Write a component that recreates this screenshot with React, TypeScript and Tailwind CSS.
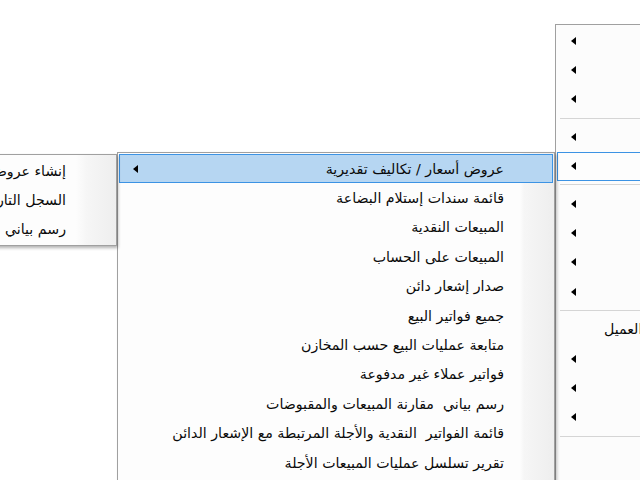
import React from "react"

type Item = { label?: string; arrow?: boolean; sep?: boolean; hot?: "fill" | "outline" }

const middleItems: Item[] = [
  { label: "عروض أسعار / تكاليف تقديرية", arrow: true, hot: "fill" },
  { label: "قائمة سندات إستلام البضاعة" },
  { label: "المبيعات النقدية" },
  { label: "المبيعات على الحساب" },
  { label: "صدار إشعار دائن" },
  { label: "جميع فواتير البيع" },
  { label: "متابعة عمليات البيع حسب المخازن" },
  { label: "فواتير عملاء غير مدفوعة" },
  { label: "رسم بياني  مقارنة المبيعات والمقبوضات" },
  { label: "قائمة الفواتير  النقدية والأجلة المرتبطة مع الإشعار الدائن" },
  { label: "تقرير تسلسل عمليات المبيعات الأجلة" },
]

const leftItems: Item[] = [
  { label: "إنشاء عروض أسعار" },
  { label: "السجل التاريخي" },
  { label: "رسم بياني للعروض" },
]

const rightItems: Item[] = [
  { arrow: true },
  { arrow: true },
  { arrow: true },
  { sep: true },
  { arrow: true },
  { arrow: true, hot: "outline" },
  { sep: true },
  { arrow: true },
  { arrow: true },
  { arrow: true },
  { arrow: true },
  { sep: true },
  { label: "كشف حساب العميل" },
  { arrow: true },
  { arrow: true },
  { arrow: true },
  { sep: true },
]

function Arrow() {
  return (
    <svg width="5" height="8" viewBox="0 0 5 8" className="shrink-0">
      <path d="M5 0V8L0 4Z" fill="#000" />
    </svg>
  )
}

function Row({ item }: { item: Item }) {
  if (item.sep) {
    return (
      <div className="h-[8px] flex items-center pl-[4px]">
        <div className="h-px w-full bg-[#d5d5d5]" />
      </div>
    )
  }
  return (
    <div
      className={
        "h-[29.4px] mx-[1px] flex items-center justify-between pl-[13px] pr-[48px] border " +
        (item.hot === "fill"
          ? "bg-[#b6d6f2] border-[#3c93e4]"
          : item.hot === "outline"
            ? "bg-[#fdfdfd] border-[#3c93e4]"
            : "border-transparent")
      }
    >
      <span className="w-[5px]">{item.arrow && <Arrow />}</span>
      {item.label && (
        <span dir="rtl" className="whitespace-pre text-[#0a0a0a]">
          {item.label}
        </span>
      )}
    </div>
  )
}

export default function App() {
  return (
    <div className="relative w-[640px] h-[480px] overflow-hidden bg-white font-['DejaVu_Sans',sans-serif] text-[14.2px] leading-none">
      {/* right (parent) menu */}
      <div className="absolute left-[555px] top-[24px] w-[300px] h-[520px] border border-[#a0a0a0] bg-[#fcfcfc] pt-[1px]">
        {rightItems.map((it, i) =>
          it.label ? (
            <div key={i} className="h-[29.4px] flex items-center pl-[48px]">
              <span dir="rtl" className="whitespace-pre text-[#0a0a0a]">
                {it.label}
              </span>
            </div>
          ) : (
            <Row key={i} item={it} />
          )
        )}
      </div>

      {/* middle submenu */}
      <div className="absolute left-[117px] top-[152px] w-[438px] h-[360px] border border-[#a0a0a0] pt-[1px] bg-[linear-gradient(to_left,#eeeeee_0px,#f6f6f6_30px,#fdfdfd_34px)] shadow-[2px_2px_3px_rgba(0,0,0,0.25)]">
        {middleItems.map((it, i) => (
          <Row key={i} item={it} />
        ))}
      </div>

      {/* left submenu */}
      <div className="absolute left-[-200px] top-[154px] w-[317px] border border-[#a0a0a0] py-[1px] bg-[linear-gradient(to_left,#eeeeee_0px,#f6f6f6_30px,#fdfdfd_40px)] shadow-[1px_2px_3px_rgba(0,0,0,0.3)]">
        {leftItems.map((it, i) => (
          <Row key={i} item={it} />
        ))}
      </div>
    </div>
  )
}
